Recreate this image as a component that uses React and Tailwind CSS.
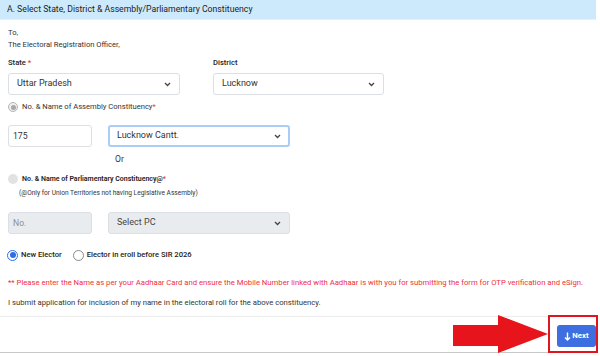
import React from "react";

function Chevron() {
  return (
    <svg width="7" height="5" viewBox="0 0 7 5" className="shrink-0">
      <path d="M1 1 L3.5 3.5 L6 1" fill="none" stroke="#444" strokeWidth="1.3" />
    </svg>
  );
}

function Select({ value, className = "", focused = false, disabled = false }) {
  return (
    <div
      className={
        "h-[22px] rounded-[3px] flex items-center justify-between text-[9px] " +
        (focused
          ? "border-2 border-[#a8cdf7] pl-[7px] pr-[7px] "
          : "border border-[#dcdfe3] pl-[8px] pr-[8px] ") +
        (disabled ? "bg-[#e9ecef] text-[#444] " : "bg-white text-[#333] ") +
        className
      }
    >
      <span>{value}</span>
      <Chevron />
    </div>
  );
}

export default function App() {
  return (
    <div
      className="w-[600px] h-[356px] bg-white relative overflow-hidden text-[#222]"
      style={{ fontFamily: "Roboto, 'Liberation Sans', sans-serif" }}
    >
      <div className="h-[20px] w-[596px] bg-[#cdeafd] border-b border-[#e3f1fc] pl-[7px] flex items-center text-[8.7px] text-[#222]">
        A. Select State, District &amp; Assembly/Parliamentary Constituency
      </div>

      <div className="pl-[8px] pr-[8px]">
        <div className="pt-[7px] text-[7.6px] leading-[12px] text-[#333]">
          <div>To,</div>
          <div>The Electoral Registration Officer,</div>
        </div>

        <div className="flex mt-[6px] gap-[33px]">
          <div className="w-[172px]">
            <div className="text-[7.6px] font-medium h-[11px] leading-[11px]">
              State <span className="text-[#e53935]">*</span>
            </div>
            <Select value="Uttar Pradesh" className="mt-[5px]" />
          </div>
          <div className="w-[171px]">
            <div className="text-[7.6px] font-medium h-[11px] leading-[11px]">District</div>
            <Select value="Lucknow" className="mt-[5px]" />
          </div>
        </div>

        <div className="flex items-center mt-[6px] h-[12px]">
          <div className="w-[10px] h-[10px] rounded-full border border-[#b5b5b5] bg-[#eeeeee] flex items-center justify-center">
            <div className="w-[5px] h-[5px] rounded-full bg-[#a8a8a8]" />
          </div>
          <span className="ml-[4px] text-[7.6px] text-[#333]">
            No. &amp; Name of Assembly Constituency<span className="text-[#e53935]">*</span>
          </span>
        </div>

        <div className="flex mt-[12px] gap-[16px]">
          <div className="w-[84px] h-[22px] border border-[#dcdfe3] rounded-[3px] flex items-center pl-[4px] text-[8.6px] text-[#333]">
            175
          </div>
          <Select value="Lucknow Cantt." focused className="w-[182px]" />
        </div>

        <div className="ml-[107px] mt-[6px] text-[8.6px] text-[#333] h-[12px] leading-[12px]">Or</div>

        <div className="flex items-center mt-[8px] h-[12px]">
          <div className="w-[10px] h-[10px] rounded-full bg-[#e2e2e2]" />
          <span className="ml-[4px] text-[7px] font-semibold text-[#222]">
            No. &amp; Name of Parliamentary Constituency@<span className="text-[#e53935]">*</span>
          </span>
        </div>
        <div className="ml-[11px] mt-[3px] text-[6.6px] text-[#333] h-[10px] leading-[10px]">
          (@Only for Union Territories not having Legislative Assembly)
        </div>

        <div className="flex mt-[14px] gap-[16px]">
          <div className="w-[84px] h-[22px] border border-[#dcdfe3] bg-[#e9ecef] rounded-[3px] flex items-center pl-[4px] text-[8.6px] text-[#8a8f94]">
            No.
          </div>
          <Select value="Select PC" disabled className="w-[182px]" />
        </div>

        <div className="flex items-center mt-[15px] h-[12px]">
          <div className="w-[11px] h-[11px] rounded-full border border-[#2c6ee6] flex items-center justify-center -ml-[1px]">
            <div className="w-[6px] h-[6px] rounded-full bg-[#2c6ee6]" />
          </div>
          <span className="ml-[3px] text-[7.6px] font-medium text-[#222]">New Elector</span>
          <div className="ml-[11px] w-[11px] h-[11px] rounded-full border border-[#8a8a8a]" />
          <span className="ml-[3px] text-[7.6px] font-medium text-[#222]">Elector in eroll before SIR 2026</span>
        </div>

        <div className="mt-[16px] text-[7.7px] text-[#f0303a] h-[12px] leading-[12px] whitespace-nowrap">
          ** Please enter the Name as per your Aadhaar Card and ensure the Mobile Number linked with Aadhaar is with you for submitting the form for OTP verification and eSign.
        </div>

        <div className="mt-[8px] text-[7.7px] text-[#333] h-[12px] leading-[12px]">
          I submit application for inclusion of my name in the electoral roll for the above constituency.
        </div>
      </div>

      <div className="absolute left-0 top-[316px] w-[596px] h-[1px] bg-[#ececec]" />

      <div className="absolute left-0 top-[352px] w-[596px] h-[1px] bg-[#c8c8c8]" />

      <div className="absolute left-[557px] top-[325px] w-[39px] h-[22px] rounded-[3px] bg-[#3e6fe0] flex items-center justify-center text-white text-[7.8px] font-bold gap-[1px]">
        <svg width="7" height="9" viewBox="0 0 7 9">
          <path d="M3.5 0.5 V8 M1 5.5 L3.5 8 L6 5.5" fill="none" stroke="white" strokeWidth="1.4" />
        </svg>
        Next
      </div>

      <div className="absolute left-[548px] top-[315px] w-[50px] h-[38px] border-2 border-[#e0161f]" />

      <svg className="absolute left-[452px] top-[314px]" width="98" height="40" viewBox="0 0 98 40">
        <polygon points="1,11 46,11 46,1 96,20 46,39 46,32 1,32" fill="#e8141c" />
      </svg>
    </div>
  );
}
